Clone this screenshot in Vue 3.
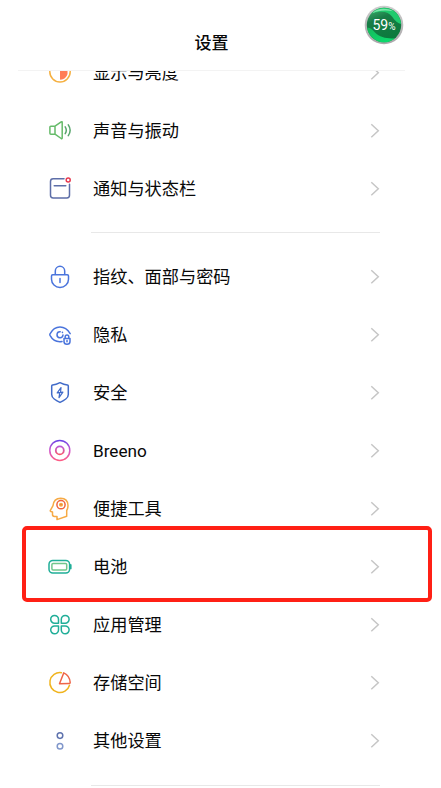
<template>
  <div class="phone">
    <header class="header">
      <h1 class="title">设置</h1>
      <div class="ball">
        <svg viewBox="0 0 40 40" width="40" height="40">
          <defs>
            <linearGradient id="ball-rim" x1="0" y1="0" x2="0" y2="1">
              <stop offset="0" stop-color="#cdcdcd" />
              <stop offset="1" stop-color="#aaa7aa" />
            </linearGradient>
            <linearGradient id="ball-dark" x1="0" y1="0" x2="0.4" y2="1">
              <stop offset="0" stop-color="#46b574" />
              <stop offset="0.4" stop-color="#187c46" />
              <stop offset="1" stop-color="#0b7a3d" />
            </linearGradient>
            <linearGradient id="ball-bright" x1="0" y1="0" x2="1" y2="1">
              <stop offset="0" stop-color="#16b95c" />
              <stop offset="1" stop-color="#0be070" />
            </linearGradient>
          </defs>
          <circle cx="20" cy="20" r="19.3" fill="url(#ball-rim)" />
          <circle cx="20" cy="20" r="17.2" fill="url(#ball-dark)" />
          <path d="M3 22.800C6 22.300 8 24 11 27.500C16 32.500 24 34 31 33.200A17.200 17.200 0 0 1 3 22.800Z" fill="url(#ball-bright)" />
          <path d="M12 4.800A17.200 17.200 0 0 1 37.200 19C34 18.500 31 16 28 11.500C24 6.500 18 5.200 7 8.700Z" fill="#1fcb6d" />
          <path d="M8 8C13 3.500 22 2.300 29 6.300C22 4.800 14 5.500 8 8Z" fill="#a5efc4" opacity="0.7" />
        </svg>
        <span class="ball-text">59<small>%</small></span>
      </div>
    </header>

    <main class="list">
      <section v-for="(group, gIdx) in groups" :key="gIdx" class="group">
        <div v-for="item in group" :key="item.icon" class="row">
          <svg class="icon" viewBox="0 0 24 24" width="24" height="24">
            <g v-if="item.icon === 'display'">
              <circle cx="12" cy="10.800" r="10.200" stroke="#f5b041" />
              <path d="M12 3H19.500V13A7 7 0 0 1 12 18.600Z" fill="#ff7d55" />
            </g>
            <g v-else-if="item.icon === 'sound'" stroke="#66bb6a">
              <path d="M7 7.200H2.800Q1.900 7.200 1.900 8.100V14.300Q1.900 15.200 2.800 15.200H7ZM7 7.200L13.200 2.900Q14.200 2.300 14.200 3.500V18.900Q14.200 20.100 13.200 19.500L7 15.200" />
              <path d="M17.200 7.800Q19.400 11.200 17.200 14.600M20.300 5.800Q24 11.200 20.300 16.600" stroke="#58a66c" />
            </g>
            <g v-else-if="item.icon === 'notice'" stroke="#5d6ea8">
              <path d="M16 1.700H5.200Q2.500 1.700 2.500 4.400V18.200Q2.500 20.900 5.200 20.900H18.800Q21.500 20.900 21.500 18.200V7.200M6.200 8.700H17.800" />
              <circle cx="20.200" cy="3" r="2" stroke="#e6394f" />
            </g>
            <g v-else-if="item.icon === 'lock'" stroke="#4a74dc">
              <path d="M4.700 9.800H19.300Q20.500 9.800 20.500 11V14.200A8.500 8.200 0 0 1 3.500 14.200V11Q3.500 9.800 4.700 9.800ZM7.300 9.800V6A4.700 4.700 0 0 1 16.700 6V9.800M12 13.500V17.600" />
            </g>
            <g v-else-if="item.icon === 'privacy'" stroke="#4a74dc">
              <path d="M14 18.600Q6 19.800 2 12.400Q1.600 11.600 2 10.900Q5.800 4.100 12 4.100Q18.200 4.100 22.200 10.600M12.200 8.700A3 3 0 1 0 15 12M14.400 9.400L14.500 9.500" />
              <path d="M16 15.600H22V18.500A3 2.800 0 0 1 16 18.500ZM17.200 15.500V13.800A1.800 1.800 0 0 1 20.800 13.800V15.500M19 17.500V18.800" />
            </g>
            <g v-else-if="item.icon === 'safe'" stroke="#416bc9">
              <path d="M12 1.700Q16 3.800 19.400 4Q20.300 4.100 20.300 5V13.500Q20.300 16.300 17.800 18Q15 20 12 21.400Q9 20 6.200 18Q3.700 16.300 3.700 13.500V5Q3.700 4.100 4.600 4Q8 3.800 12 1.700Z" />
              <path d="M13 6.600L9.200 11.900L14.900 11.100L11 16.700M13 6.600L12.600 10.600M11.600 12.600L11 16.700" stroke-width="1.200" />
            </g>
            <g v-else-if="item.icon === 'breeno'" stroke="url(#breeno-ring)">
              <defs>
                <linearGradient id="breeno-ring" x1="0" y1="1" x2="0" y2="22" gradientUnits="userSpaceOnUse">
                  <stop offset="0" stop-color="#6843e8" />
                  <stop offset="0.500" stop-color="#d05acb" />
                  <stop offset="1" stop-color="#ff5c82" />
                </linearGradient>
                <linearGradient id="breeno-dot" x1="0" y1="7" x2="0" y2="16" gradientUnits="userSpaceOnUse">
                  <stop offset="0" stop-color="#b958dc" />
                  <stop offset="1" stop-color="#fa5868" />
                </linearGradient>
              </defs>
              <circle cx="11.800" cy="11.400" r="10" />
              <circle cx="11.800" cy="11.400" r="4" stroke="url(#breeno-dot)" stroke-width="1.800" />
            </g>
            <g v-else-if="item.icon === 'tools'" stroke="#f6aa45">
              <path d="M9 22.200V19.400H6.400Q4.500 19.400 4.500 17.500V15L2.800 14.500Q2 14.200 2.400 13.300L5 8.600Q5.700 1.300 12.700 1.200Q19.800 1.300 20 8.400Q20 11.300 18.700 13.500V19.300L9 22.600Z" />
              <circle cx="13" cy="7.700" r="4.100" stroke="#f0643c" />
              <circle cx="13" cy="7.700" r="1.300" fill="#e8472c" />
            </g>
            <g v-else-if="item.icon === 'battery'" stroke="#20ae98">
              <rect x="1" y="5.400" width="20.600" height="12.600" rx="3.800" />
              <rect x="3.900" y="8.400" width="14.800" height="6.600" rx="1.200" stroke="#72c68c" />
              <path d="M22.700 10V13.400" stroke-width="1.800" />
            </g>
            <g v-else-if="item.icon === 'apps'" stroke="#20ae98">
              <path d="M10.500 10.200H6.700A3.900 3.900 0 1 1 10.500 6.300ZM13.300 10.200V6.300A3.900 3.900 0 1 1 17.100 10.200ZM10.500 13V16.900A3.900 3.900 0 1 1 6.700 13ZM13.300 13H17.100A3.900 3.900 0 1 1 13.300 16.900Z" />
            </g>
            <g v-else-if="item.icon === 'storage'">
              <path d="M13.400 1.700A10 10 0 1 0 21.500 14.200" stroke="#f0b41f" />
              <path d="M15.700 1.900Q21.800 4.700 22.200 11.600Q22.200 12.400 21.400 12.400L11.500 12.700Z" stroke="#ee6548" />
            </g>
            <g v-else>
              <circle cx="12" cy="6.600" r="2.800" stroke="#5f73ae" />
              <circle cx="12" cy="17.300" r="2.800" stroke="#8197cb" />
            </g>
          </svg>
          <span class="label">{{ item.label }}</span>
          <svg class="arrow" viewBox="0 0 10 16" width="10" height="16">
            <path d="M1.300 1.200L8.300 7.700L1.300 14.200" />
          </svg>
          <div v-if="item.marked" class="mark"></div>
        </div>
      </section>
    </main>
  </div>
</template>

<script setup>
const groups = [
  [
    { icon: 'display', label: '显示与亮度' },
    { icon: 'sound', label: '声音与振动' },
    { icon: 'notice', label: '通知与状态栏' }
  ],
  [
    { icon: 'lock', label: '指纹、面部与密码' },
    { icon: 'privacy', label: '隐私' },
    { icon: 'safe', label: '安全' },
    { icon: 'breeno', label: 'Breeno' },
    { icon: 'tools', label: '便捷工具' },
    { icon: 'battery', label: '电池', marked: true },
    { icon: 'apps', label: '应用管理' },
    { icon: 'storage', label: '存储空间' },
    { icon: 'other', label: '其他设置' }
  ]
]
</script>

<style>
body {
  margin: 0;
  background: #fff;
}
</style>

<style scoped>
.phone {
  display: flex;
  flex-direction: column;
  height: 788px;
  overflow: hidden;
  background: #fff;
  color: #080808;
  font-family: Roboto, "Noto Sans CJK SC", sans-serif;
}

.header {
  position: relative;
  flex: none;
  box-sizing: border-box;
  width: 387px;
  height: 71px;
  margin-left: 18px;
  padding-top: 31px;
  border-bottom: 1px solid #f3f3f3;
}

.title {
  margin: 0;
  font-size: 17px;
  font-weight: 500;
  line-height: 24px;
  text-align: center;
}

.ball {
  position: absolute;
  top: 5px;
  left: 346px;
  width: 40px;
  height: 40px;
}

.ball svg {
  display: block;
}

.ball-text {
  position: absolute;
  inset: 0;
  color: #fff;
  font-size: 14px;
  line-height: 41px;
  text-align: center;
}

.ball-text small {
  font-size: 10px;
}

.list {
  flex: 1;
  min-height: 0;
  overflow: hidden;
}

.group {
  padding-bottom: 14px;
}

.group:first-child {
  margin-top: -27px;
}

.group::after {
  content: "";
  display: block;
  height: 1px;
  margin: 14px 61px -14px 91px;
  background: #e8e8e8;
}

.group + .group {
  padding-top: 15px;
}

.group + .group::after {
  margin-top: 15px;
}

.row {
  position: relative;
  display: flex;
  align-items: center;
  height: 58px;
  padding: 0 61px 0 48px;
}

.icon {
  flex: none;
  fill: none;
  stroke-width: 1.5;
  stroke-linecap: round;
  stroke-linejoin: round;
}

.label {
  flex: 1;
  margin-left: 21px;
  font-size: 17.2px;
  line-height: 24px;
  white-space: nowrap;
}

.arrow {
  flex: none;
  fill: none;
  stroke: #c6c6c6;
  stroke-width: 1.5;
}

.mark {
  position: absolute;
  top: -12px;
  left: 22px;
  box-sizing: border-box;
  width: 410px;
  height: 76px;
  border: 4px solid #ff2015;
  border-radius: 5px;
}
</style>
